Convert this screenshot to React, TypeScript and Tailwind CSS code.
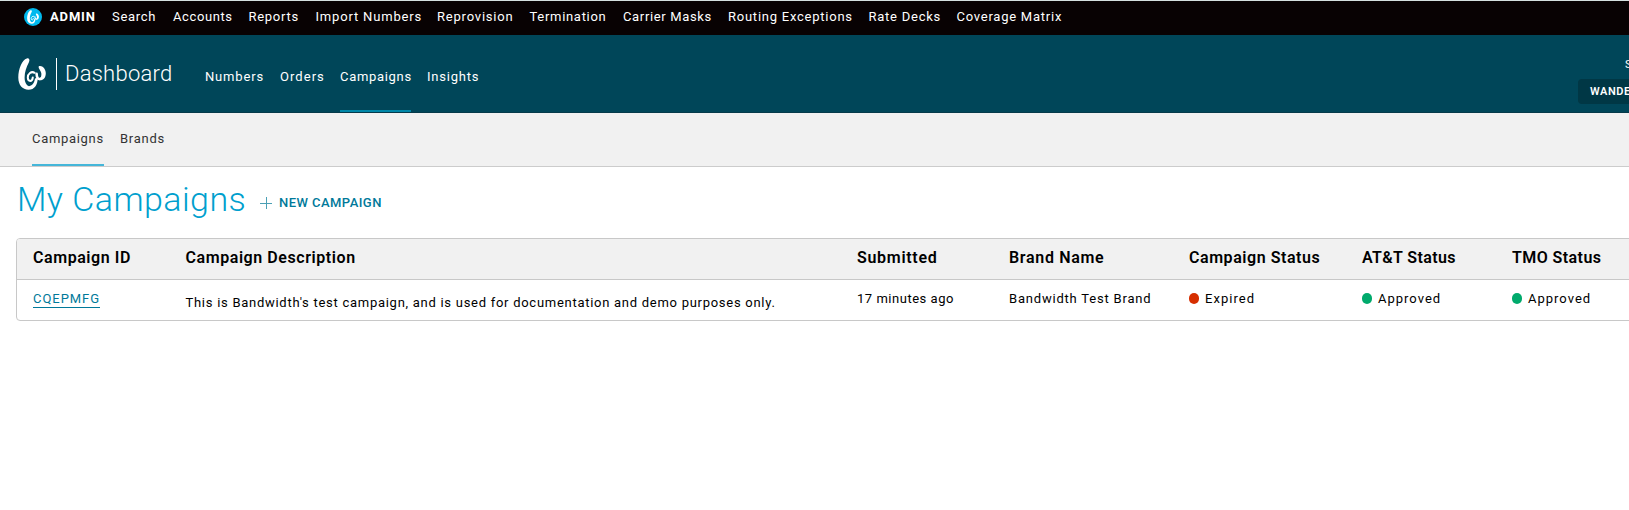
type NavItem = { label: string; style: string };

const adminNav: NavItem[] = [
  { label: "Search", style: "w-[45px] tracking-[0.7px]" },
  { label: "Accounts", style: "w-[59.5px] tracking-[0.6px]" },
  { label: "Reports", style: "w-[51px] tracking-[0.72px]" },
  { label: "Import Numbers", style: "w-[105.5px] tracking-[0.82px]" },
  { label: "Reprovision", style: "w-[76.5px] tracking-[0.8px]" },
  { label: "Termination", style: "w-[77.5px] tracking-[0.7px]" },
  { label: "Carrier Masks", style: "w-[89px] tracking-[0.65px]" },
  { label: "Routing Exceptions", style: "w-[124.5px] tracking-[0.76px]" },
  { label: "Rate Decks", style: "w-[72px] tracking-[0.75px]" },
  { label: "Coverage Matrix", style: "w-[107px] tracking-[0.76px]" },
];

const mainNav: NavItem[] = [
  { label: "Numbers", style: "w-[59px] tracking-[0.84px]" },
  { label: "Orders", style: "w-[44px] tracking-[1.05px]" },
  { label: "Campaigns", style: "w-[71px] tracking-[0.68px]" },
  { label: "Insights", style: "w-[53px] tracking-[0.78px]" },
];

const columns: NavItem[] = [
  { label: "Campaign ID", style: "tracking-[0.56px]" },
  { label: "Campaign Description", style: "tracking-[0.57px]" },
  { label: "Submitted", style: "tracking-[0.7px]" },
  { label: "Brand Name", style: "tracking-[0.68px]" },
  { label: "Campaign Status", style: "tracking-[0.55px]" },
  { label: "AT&T Status", style: "tracking-[0.38px]" },
  { label: "TMO Status", style: "tracking-[0.43px]" },
];

const gridColumns =
  "grid grid-cols-[152.5px_671.5px_152px_180px_173px_150px_170px] pl-4";

function LogoMark({ className }: { className: string }) {
  return (
    <svg
      viewBox="0 0 28 32"
      className={className}
      fill="none"
      stroke="currentColor"
      strokeLinecap="round"
      strokeLinejoin="round"
    >
      <path
        d="M8.8 0.4C11.2 0 12.2 1.8 10.8 4.4C8.4 9 6.6 14 6.6 19.5C6.6 24 8.4 27.6 11 28.2C14.8 27.6 16.4 24.4 17 20.5L19.8 19.8C19.6 27 16.6 31.8 10.5 31.8C4.4 31.8 0.3 27.2 0.3 19.6C0.3 10.5 4.2 1.6 8.8 0.4Z"
        fill="currentColor"
        stroke="none"
      />
      <path
        d="M16.6 14.8C13.4 12.8 9.8 15.8 9.8 19.6C9.9 24 14.4 24.2 14.8 19.4"
        strokeWidth="2"
      />
      <path d="M18.6 15.8C18.6 20.2 20.6 22 23.4 20.4" strokeWidth="2.6" />
      <path
        d="M20.8 8.2C24 7 27.8 10.6 27.8 15.2C27.8 20 24.8 22.8 21.2 22.2C22.4 20.8 23.4 18.8 23.4 16C23.4 12.6 19.8 10.4 20.8 8.2Z"
        fill="currentColor"
        stroke="none"
      />
    </svg>
  );
}

function Status({ label, color, tracking }: { label: string; color: string; tracking: string }) {
  return (
    <div className={`flex items-center ${tracking}`}>
      <span className={`mr-[6px] h-[11px] w-[10px] -translate-y-px rounded-full ${color}`} />
      {label}
    </div>
  );
}

export default function App() {
  return (
    <div className="h-[510px] overflow-hidden bg-white font-['Roboto',sans-serif] text-[13px] leading-5 whitespace-nowrap text-black">
      <div className="flex h-[35px] items-center border-t border-[#d5e0e0] bg-[#080203] pb-[3px] pl-6 text-white">
        <div className="flex size-[18px] items-center justify-center rounded-full bg-[#00b9ee]">
          <LogoMark className="h-[14px] w-[12px]" />
        </div>
        <span className="ml-2 w-[62px] font-bold tracking-[0.85px]">ADMIN</span>
        <nav className="flex gap-4">
          {adminNav.map((item) => (
            <a key={item.label} className={item.style}>{item.label}</a>
          ))}
        </nav>
      </div>

      <header className="flex h-[78px] items-stretch border-b border-[#063a4a] bg-[#004659] text-white">
        <div className="flex w-[205px] items-start pt-[23px] pl-[18px]">
          <LogoMark className="h-8 w-7" />
          <span className="ml-[10px] h-8 w-px bg-white" />
          <span className="ml-[8px] pt-[3px] text-[22px] leading-[26px] font-light tracking-[0.25px]">Dashboard</span>
        </div>
        <nav className="flex items-stretch gap-4">
          {mainNav.map((item) => (
            <a
              key={item.label}
              className={`border-b-2 pt-[32px] ${item.style} ${item.label === "Campaigns" ? "border-[#0087a8]" : "border-transparent"}`}
            >
              {item.label}
            </a>
          ))}
        </nav>
        <div className="ml-auto flex w-[51px] flex-col overflow-hidden pt-[20px] text-[11px]">
          <span className="ml-[47px] tracking-[0.6px]">Support</span>
          <span className="mt-[4px] h-[25px] w-[130px] rounded-[4px] bg-[#003745] pl-3 leading-[25px] font-semibold tracking-[0.6px]">
            WANDERING
          </span>
        </div>
      </header>

      <nav className="flex h-[54px] gap-4 border-b border-[#ccc] bg-[#f1f1f1] pl-8 text-[#333]">
        <a className="w-[72px] border-b-2 border-[#45b6d9] pt-4 tracking-[0.68px]">Campaigns</a>
        <a className="pt-4 tracking-[0.75px]">Brands</a>
      </nav>

      <main className="pl-4">
        <div className="flex h-[71px] items-start">
          <h1 className="w-[244px] pt-[12px] pl-px text-[34px] leading-10 font-light tracking-[0.45px] text-[#009fce]">
            My Campaigns
          </h1>
          <svg viewBox="0 0 12 12" className="mt-[30px] size-3 text-[#4ba0b5]" stroke="currentColor">
            <path d="M0 6.5H12M6.5 0V12" />
          </svg>
          <a className="mt-[26px] ml-[7px] font-medium tracking-[0.45px] text-[#00799a]">NEW CAMPAIGN</a>
        </div>

        <section className="h-[83px] w-[1660px] overflow-hidden rounded-[4px] border border-[#c8c8c8]">
          <div className={`${gridColumns} h-[41px] border-b border-[#c8c8c8] bg-[#f1f1f1] pt-[9px] text-base leading-5 font-semibold`}>
            {columns.map((column) => (
              <div key={column.label} className={column.style}>{column.label}</div>
            ))}
          </div>
          <div className={`${gridColumns} items-start pt-[9px]`}>
            <div>
              <a className="inline-block h-[19px] border-b border-[#00799a] leading-5 tracking-[0.95px] text-[#00799a]">CQEPMFG</a>
            </div>
            <div className="pt-[4px] tracking-[0.725px]">
              This is Bandwidth's test campaign, and is used for documentation and demo purposes only.
            </div>
            <div className="tracking-[0.52px]">17 minutes ago</div>
            <div className="tracking-[0.8px]">Bandwidth Test Brand</div>
            <Status label="Expired" color="bg-[#d62e00]" tracking="tracking-[1.05px]" />
            <Status label="Approved" color="bg-[#00aa6c]" tracking="tracking-[1px]" />
            <Status label="Approved" color="bg-[#00aa6c]" tracking="tracking-[1px]" />
          </div>
        </section>
      </main>
    </div>
  );
}
